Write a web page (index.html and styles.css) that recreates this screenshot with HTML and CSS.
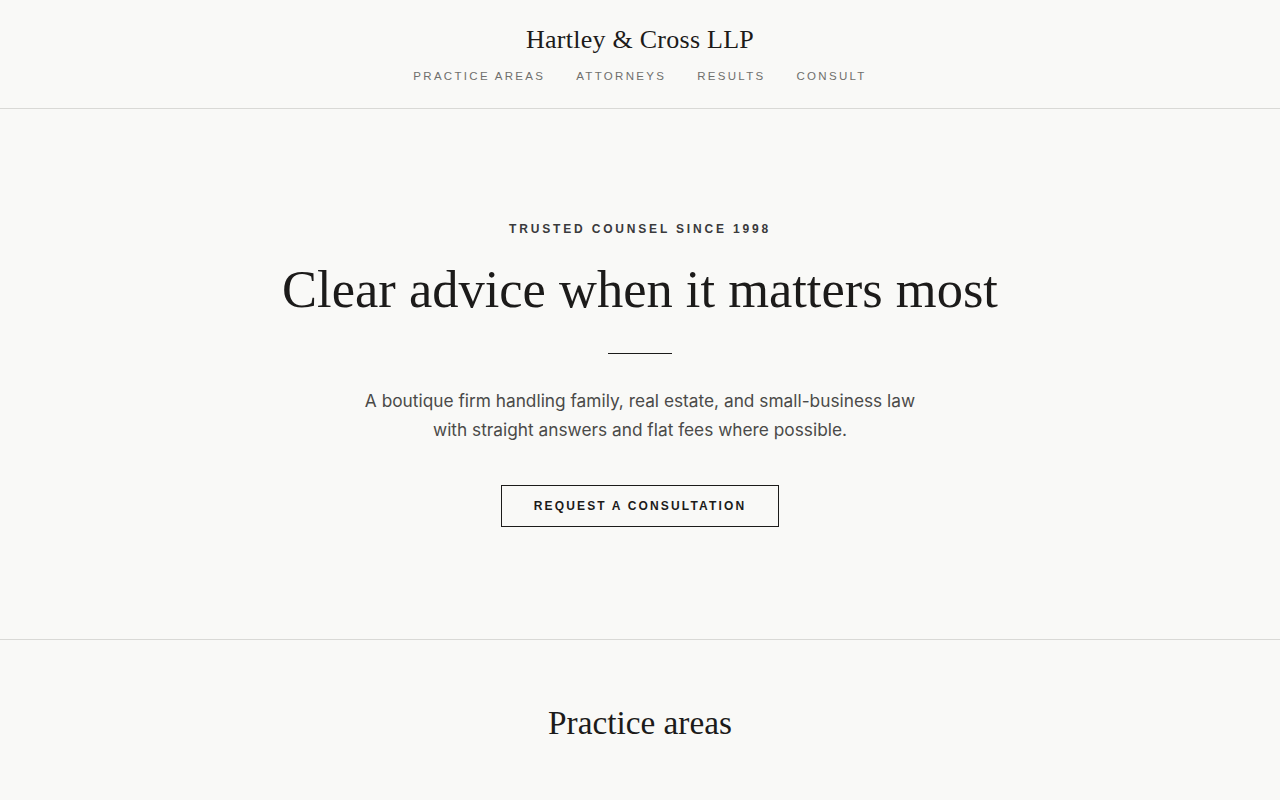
FILE: index.html
```html
<!DOCTYPE html>
<html lang="en">
<head>
<meta charset="utf-8">
<title>Hartley &amp; Cross LLP</title>
<link rel="stylesheet" href="styles.css">
</head>
<body>
<header class="site-header">
  <div class="brand">Hartley &amp; Cross LLP</div>
  <nav class="nav">
    <a href="#">Practice Areas</a>
    <a href="#">Attorneys</a>
    <a href="#">Results</a>
    <a href="#">Consult</a>
  </nav>
</header>
<main>
  <section class="hero">
    <p class="eyebrow">Trusted Counsel Since 1998</p>
    <h1 class="hero-title">Clear advice when it matters most</h1>
    <div class="rule"></div>
    <p class="lead">A boutique firm handling family, real estate, and small-business law<br>with straight answers and flat fees where possible.</p>
    <a class="btn" href="#">Request a Consultation</a>
  </section>
  <section class="practice">
    <h2 class="section-title">Practice areas</h2>
  </section>
</main>
</body>
</html>
```

FILE: styles.css
```css
* { box-sizing: border-box; }
html, body { margin: 0; padding: 0; }
body {
  background: #f9f9f7;
  color: #1c1b1a;
  font-family: "Liberation Sans", Arial, sans-serif;
}
a { text-decoration: none; color: inherit; }

.site-header {
  display: flex;
  flex-direction: column;
  align-items: center;
  padding: 24px 0 24px;
  border-bottom: 1px solid #d9d9d6;
  height: 109px;
}
.brand {
  font-family: "Liberation Serif", "Times New Roman", serif;
  font-size: 26px;
  line-height: 32px;
  color: #1c1b1a;
  letter-spacing: 0.01em;
}
.nav {
  display: flex;
  gap: 31px;
  margin-top: 12px;
}
.nav a {
  font-size: 11.5px;
  line-height: 16px;
  letter-spacing: 0.2em;
  text-transform: uppercase;
  color: #6f6f6c;
}

.hero {
  display: flex;
  flex-direction: column;
  align-items: center;
  text-align: center;
  padding: 112px 0 0;
  height: 531px;
  border-bottom: 1px solid #d9d9d6;
}
.eyebrow {
  margin: 0;
  font-size: 12px;
  line-height: 16px;
  font-weight: 700;
  letter-spacing: 0.235em;
  text-transform: uppercase;
  color: #3a3a3c;
}
.hero-title {
  margin: 22px 0 0;
  font-family: "Liberation Serif", "Times New Roman", serif;
  font-weight: 400;
  font-size: 52.5px;
  line-height: 60px;
  color: #1c1b1a;
}
.rule {
  width: 64px;
  height: 1px;
  background: #1c1b1a;
  margin-top: 34px;
}
.lead {
  margin: 32px 0 0;
  font-family: Inter, "Liberation Sans", sans-serif;
  font-size: 17.3px;
  line-height: 29px;
  color: #4a4a48;
}
.btn {
  margin-top: 41px;
  display: inline-flex;
  align-items: center;
  justify-content: center;
  width: 278px;
  height: 42px;
  border: 1px solid #1c1b1a;
  font-size: 12px;
  font-weight: 700;
  letter-spacing: 0.18em;
  text-transform: uppercase;
  color: #1c1b1a;
}

.practice {
  display: flex;
  flex-direction: column;
  align-items: center;
  padding-top: 63px;
}
.section-title {
  margin: 0;
  font-family: "Liberation Serif", "Times New Roman", serif;
  font-weight: 400;
  font-size: 33.3px;
  line-height: 40px;
  color: #1c1b1a;
}
```
